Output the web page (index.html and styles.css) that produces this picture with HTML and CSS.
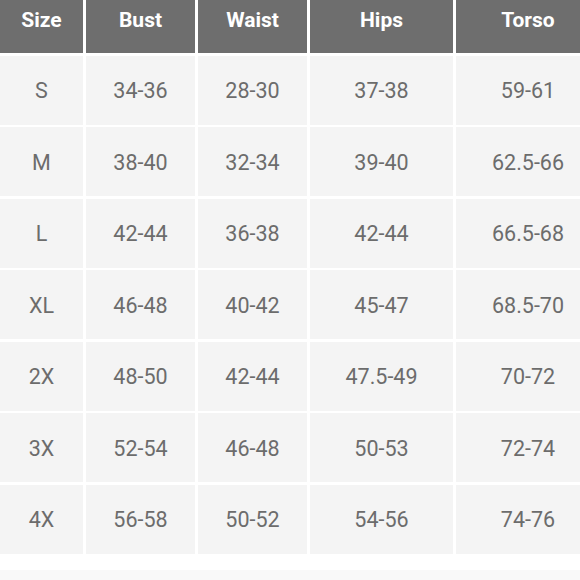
FILE: index.html
```html
<!DOCTYPE html>
<html>
<head>
<meta charset="utf-8">
<link rel="stylesheet" href="styles.css">
</head>
<body>
<div class="chart">
  <div class="grid">
    <div class="head">Size</div><div class="head">Bust</div><div class="head">Waist</div><div class="head">Hips</div><div class="head">Torso</div>
    <div class="cell">S</div><div class="cell">34-36</div><div class="cell">28-30</div><div class="cell">37-38</div><div class="cell">59-61</div>
    <div class="cell">M</div><div class="cell">38-40</div><div class="cell">32-34</div><div class="cell">39-40</div><div class="cell">62.5-66</div>
    <div class="cell">L</div><div class="cell">42-44</div><div class="cell">36-38</div><div class="cell">42-44</div><div class="cell">66.5-68</div>
    <div class="cell">XL</div><div class="cell">46-48</div><div class="cell">40-42</div><div class="cell">45-47</div><div class="cell">68.5-70</div>
    <div class="cell">2X</div><div class="cell">48-50</div><div class="cell">42-44</div><div class="cell">47.5-49</div><div class="cell">70-72</div>
    <div class="cell">3X</div><div class="cell">52-54</div><div class="cell">46-48</div><div class="cell">50-53</div><div class="cell">72-74</div>
    <div class="cell">4X</div><div class="cell">56-58</div><div class="cell">50-52</div><div class="cell">54-56</div><div class="cell">74-76</div>
  </div>
  <div class="footer"></div>
</div>
</body>
</html>
```
FILE: styles.css
```css
html, body {
  margin: 0;
  padding: 0;
  background: #ffffff;
  overflow: hidden;
}
body {
  width: 580px;
  height: 580px;
  font-family: Roboto, "Liberation Sans", sans-serif;
}
.chart {
  width: 600px;
}
.grid {
  display: grid;
  grid-template-columns: 83px 109px 109px 143px 144px;
  grid-template-rows: 53px;
  grid-auto-rows: 69px;
  column-gap: 3px;
  row-gap: 2.5px;
}
.head {
  background: #6e6e6e;
  color: #ffffff;
  font-weight: 700;
  font-size: 21px;
  display: flex;
  justify-content: center;
  align-items: flex-start;
  padding-top: 8px;
  box-sizing: border-box;
}
.cell {
  background: #f4f4f4;
  color: #6c6c6c;
  font-size: 21.5px;
  display: flex;
  justify-content: center;
  align-items: center;
  padding-top: 1px;
  box-sizing: border-box;
}
.footer {
  margin-top: 16px;
  height: 20px;
  background: #f9f9f9;
}
```
